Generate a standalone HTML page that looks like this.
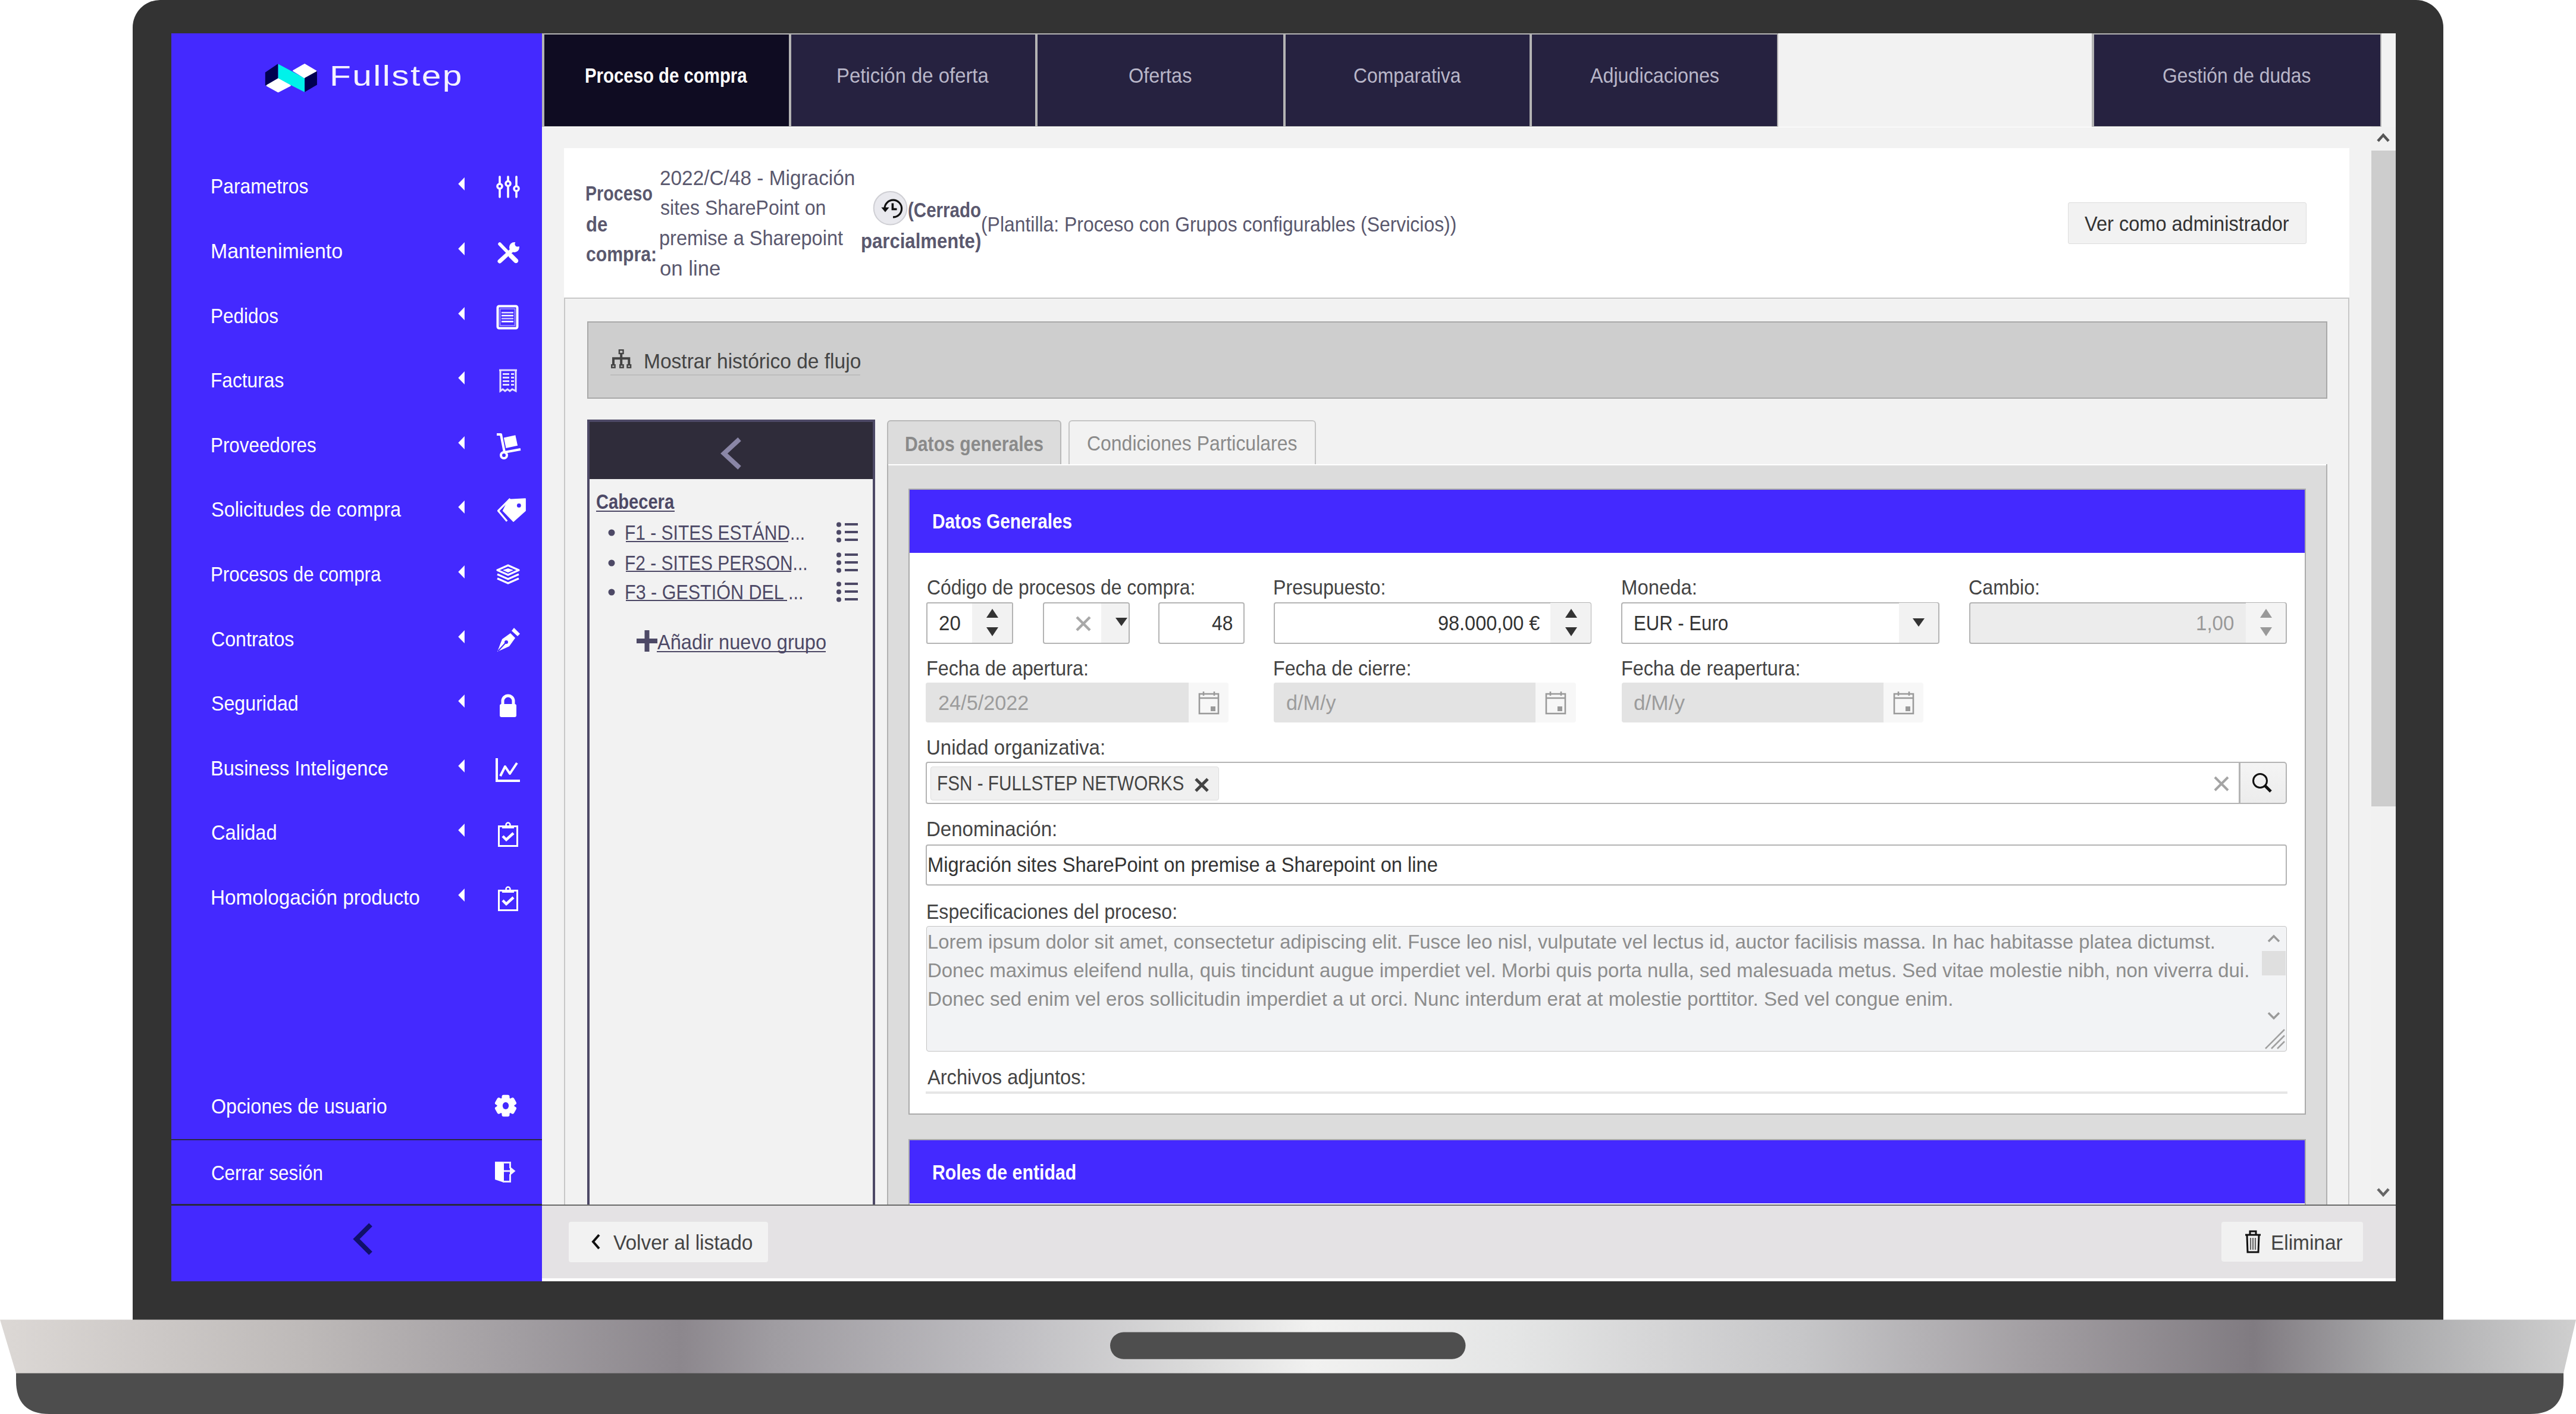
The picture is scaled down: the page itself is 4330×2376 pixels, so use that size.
<!DOCTYPE html>
<html><head><meta charset="utf-8"><style>
html,body{margin:0;padding:0;width:4330px;height:2376px;overflow:hidden;background:#ffffff;}
body{position:relative;font-family:"Liberation Sans", sans-serif;}
.a{position:absolute;box-sizing:border-box;}
.t{position:absolute;white-space:nowrap;transform-origin:0 0;}
</style></head><body>
<div class="a" style="left:223.0px;top:0.0px;width:3883.5px;height:2218.0px;background:#333333;border-radius:46px 46px 0 0;"></div>
<svg class="a" style="left:0.0px;top:2150.0px;" width="4330.0" height="226.0" viewBox="0 0 4330 226"><defs><linearGradient id="bg1" x1="0" x2="1" y1="0" y2="0"><stop offset="0" stop-color="#dcd8d5"/><stop offset="0.12" stop-color="#bdb9b8"/><stop offset="0.2" stop-color="#a29ea2"/><stop offset="0.264" stop-color="#8c878d"/><stop offset="0.3" stop-color="#9f9ca1"/><stop offset="0.39" stop-color="#bebdc1"/><stop offset="0.46" stop-color="#d9d9d9"/><stop offset="0.51" stop-color="#f1f1f0"/><stop offset="0.59" stop-color="#e4e5e5"/><stop offset="0.64" stop-color="#d6d6d7"/><stop offset="0.7" stop-color="#c6c6c8"/><stop offset="0.79" stop-color="#a29ea2"/><stop offset="0.875" stop-color="#807b81"/><stop offset="0.93" stop-color="#a9a9ab"/><stop offset="1.0" stop-color="#cfcfcf"/></linearGradient></defs><path d="M27 157 L4309 157 L4309 170 Q4309 226 4253 226 L83 226 Q27 226 27 170 Z" fill="#4d4d4d"/><path d="M0 67.6 L4330 67.6 L4309 157.5 L27 157.5 Z" fill="url(#bg1)"/><rect x="1866" y="88.4" width="597.5" height="45.4" rx="22.7" fill="#4e4e4e"/></svg>
<div class="a" style="left:288.0px;top:56.0px;width:3738.7px;height:2096.5px;background:#ffffff;"></div>
<div class="a" style="left:911.0px;top:56.0px;width:3115.7px;height:2092.0px;background:#f2f2f2;"></div>
<div class="a" style="left:288.0px;top:56.0px;width:623.0px;height:2096.5px;background:#4429ff;"></div>
<svg class="a" style="left:440.0px;top:100.0px;" width="100.0" height="60.0" viewBox="0 0 100 60"><polygon points="6.4,22 26.7,8.2 26.7,31 7.6,43.7 6.4,42.4" fill="#000050" stroke="#000050" stroke-width="1.2" stroke-linejoin="round"/><polygon points="27.6,7.6 72.1,31.4 72.1,54.7 27.6,32.2" fill="#00f2ea"/><polygon points="8.6,43.7 27.6,32.7 47.8,43.7 27.6,54.2" fill="#ffffff" stroke="#ffffff" stroke-width="2.2" stroke-linejoin="round"/><polygon points="53.2,18.9 72.1,8.2 91.1,19.5 72.1,30.5" fill="#ffffff" stroke="#ffffff" stroke-width="2.2" stroke-linejoin="round"/><polygon points="72.1,31 92.9,19.5 92.9,42.4 72.1,54.7" fill="#000050"/></svg>
<div class="t" style="left:553.8px;top:103.9px;font-size:48px;line-height:48px;color:#f4f2ff;transform:scaleX(1.2206);letter-spacing:2px;">Fullstep</div>
<div class="t" style="left:353.7px;top:295.4px;font-size:35px;line-height:35px;color:#ffffff;transform:scaleX(0.9081);">Parametros</div>
<svg class="a" style="left:768.0px;top:297.4px;" width="16.0" height="24.0" viewBox="0 0 16 24"><polygon points="2.2,12 12.9,1 12.9,23" fill="#ffffff"/></svg>
<div class="t" style="left:353.6px;top:404.0px;font-size:35px;line-height:35px;color:#ffffff;transform:scaleX(0.9673);">Mantenimiento</div>
<svg class="a" style="left:768.0px;top:406.0px;" width="16.0" height="24.0" viewBox="0 0 16 24"><polygon points="2.2,12 12.9,1 12.9,23" fill="#ffffff"/></svg>
<div class="t" style="left:353.7px;top:512.6px;font-size:35px;line-height:35px;color:#ffffff;transform:scaleX(0.9009);">Pedidos</div>
<svg class="a" style="left:768.0px;top:514.6px;" width="16.0" height="24.0" viewBox="0 0 16 24"><polygon points="2.2,12 12.9,1 12.9,23" fill="#ffffff"/></svg>
<div class="t" style="left:353.7px;top:621.2px;font-size:35px;line-height:35px;color:#ffffff;transform:scaleX(0.9053);">Facturas</div>
<svg class="a" style="left:768.0px;top:623.2px;" width="16.0" height="24.0" viewBox="0 0 16 24"><polygon points="2.2,12 12.9,1 12.9,23" fill="#ffffff"/></svg>
<div class="t" style="left:353.7px;top:729.8px;font-size:35px;line-height:35px;color:#ffffff;transform:scaleX(0.8956);">Proveedores</div>
<svg class="a" style="left:768.0px;top:731.8px;" width="16.0" height="24.0" viewBox="0 0 16 24"><polygon points="2.2,12 12.9,1 12.9,23" fill="#ffffff"/></svg>
<div class="t" style="left:354.6px;top:838.4px;font-size:35px;line-height:35px;color:#ffffff;transform:scaleX(0.9265);">Solicitudes de compra</div>
<svg class="a" style="left:768.0px;top:840.4px;" width="16.0" height="24.0" viewBox="0 0 16 24"><polygon points="2.2,12 12.9,1 12.9,23" fill="#ffffff"/></svg>
<div class="t" style="left:353.7px;top:947.0px;font-size:35px;line-height:35px;color:#ffffff;transform:scaleX(0.8920);">Procesos de compra</div>
<svg class="a" style="left:768.0px;top:949.0px;" width="16.0" height="24.0" viewBox="0 0 16 24"><polygon points="2.2,12 12.9,1 12.9,23" fill="#ffffff"/></svg>
<div class="t" style="left:354.6px;top:1055.6px;font-size:35px;line-height:35px;color:#ffffff;transform:scaleX(0.9185);">Contratos</div>
<svg class="a" style="left:768.0px;top:1057.6px;" width="16.0" height="24.0" viewBox="0 0 16 24"><polygon points="2.2,12 12.9,1 12.9,23" fill="#ffffff"/></svg>
<div class="t" style="left:354.6px;top:1164.2px;font-size:35px;line-height:35px;color:#ffffff;transform:scaleX(0.9191);">Seguridad</div>
<svg class="a" style="left:768.0px;top:1166.2px;" width="16.0" height="24.0" viewBox="0 0 16 24"><polygon points="2.2,12 12.9,1 12.9,23" fill="#ffffff"/></svg>
<div class="t" style="left:353.6px;top:1272.8px;font-size:35px;line-height:35px;color:#ffffff;transform:scaleX(0.9308);">Business Inteligence</div>
<svg class="a" style="left:768.0px;top:1274.8px;" width="16.0" height="24.0" viewBox="0 0 16 24"><polygon points="2.2,12 12.9,1 12.9,23" fill="#ffffff"/></svg>
<div class="t" style="left:354.6px;top:1381.4px;font-size:35px;line-height:35px;color:#ffffff;transform:scaleX(0.9318);">Calidad</div>
<svg class="a" style="left:768.0px;top:1383.4px;" width="16.0" height="24.0" viewBox="0 0 16 24"><polygon points="2.2,12 12.9,1 12.9,23" fill="#ffffff"/></svg>
<div class="t" style="left:353.6px;top:1490.0px;font-size:35px;line-height:35px;color:#ffffff;transform:scaleX(0.9517);">Homologación producto</div>
<svg class="a" style="left:768.0px;top:1492.0px;" width="16.0" height="24.0" viewBox="0 0 16 24"><polygon points="2.2,12 12.9,1 12.9,23" fill="#ffffff"/></svg>
<svg class="a" style="left:829.5px;top:290.0px;" width="48.0" height="48.0" viewBox="-24 -24 48 48"><g stroke="#ffffff" stroke-width="3.6" stroke-linecap="round" fill="#4429ff"><line x1="-14" y1="-17" x2="-14" y2="17"/><line x1="0" y1="-17" x2="0" y2="17"/><line x1="14" y1="-17" x2="14" y2="17"/><circle cx="-14" cy="-1" r="4"/><circle cx="0" cy="-5.5" r="4"/><circle cx="14" cy="3" r="4"/></g></svg>
<svg class="a" style="left:829.5px;top:400.0px;" width="48.0" height="48.0" viewBox="-24 -24 48 48"><g stroke="#ffffff" stroke-linecap="round" fill="none"><line x1="-14" y1="-14" x2="14" y2="15" stroke-width="5.5"/><line x1="-14" y1="15" x2="8" y2="-5" stroke-width="7"/><line x1="5" y1="6" x2="13" y2="14" stroke-width="8"/></g><circle cx="10.5" cy="-8.5" r="8.5" fill="#ffffff"/><circle cx="16" cy="-14" r="4.6" fill="#4429ff"/></svg>
<svg class="a" style="left:829.0px;top:509.0px;" width="48.0" height="48.0" viewBox="-24 -24 48 48"><rect x="-16.5" y="-18.5" width="33" height="37" rx="2.5" fill="none" stroke="#ffffff" stroke-width="4"/><rect x="-12.5" y="-14" width="25" height="28" fill="none" stroke="#ffffff" stroke-opacity="0.55" stroke-width="1.5"/><g fill="#ffffff"><rect x="-10" y="-9" width="20" height="2.6" opacity=".8"/><rect x="-10" y="-4" width="20" height="2.6"/><rect x="-10" y="1" width="20" height="2.6" opacity=".7"/><rect x="-10" y="6" width="20" height="2.6"/></g></svg>
<svg class="a" style="left:829.5px;top:616.0px;" width="48.0" height="48.0" viewBox="-24 -24 48 48"><g opacity=".85"><g fill="none" stroke="#ffffff" stroke-width="3"><path d="M-15 -18 L15 -18 M-13 -18 L-13 17 L-9 14 L-5 17 L-1 14 L3 17 L7 14 L13 17 L13 -18"/></g><g fill="#ffffff"><rect x="-9" y="-13" width="11" height="3"/><rect x="5" y="-13" width="5" height="3"/><rect x="-9" y="-7" width="11" height="3"/><rect x="5" y="-7" width="5" height="3"/><rect x="-9" y="-1" width="11" height="3"/><rect x="5" y="-1" width="5" height="3"/><rect x="-9" y="5" width="11" height="3"/><rect x="5" y="5" width="5" height="3"/></g></g></svg>
<svg class="a" style="left:831.0px;top:726.0px;" width="48.0" height="48.0" viewBox="-24 -24 48 48"><path d="M-20 -20 L-13 -20 L-7 10 L20 5" fill="none" stroke="#ffffff" stroke-width="4" stroke-linejoin="round"/><circle cx="-8" cy="15" r="5" fill="#4429ff" stroke="#ffffff" stroke-width="4"/><rect x="-5" y="-16" width="20" height="18" transform="rotate(-12)" fill="#ffffff"/></svg>
<svg class="a" style="left:836.0px;top:833.0px;" width="48.0" height="48.0" viewBox="-24 -24 48 48"><path d="M-5.1 -17.5 L23.1 -18.9 L23.1 1.3 L3 19.2 L-14.5 1.3 Z" fill="#ffffff" stroke="#ffffff" stroke-width="1.5" stroke-linejoin="round"/><circle cx="12.3" cy="-7.6" r="3.4" fill="#4429ff"/><path d="M-2.4 -18.9 L-22.6 1.3 L-7.8 18.7" stroke="#ffffff" stroke-width="3.2" fill="none"/></svg>
<svg class="a" style="left:830.0px;top:942.0px;" width="48.0" height="48.0" viewBox="-24 -24 48 48"><g fill="none" stroke="#ffffff" stroke-width="3.4" stroke-linejoin="round"><path d="M0 -16 L18 -8 L0 0 L-18 -8Z"/><path d="M-18 -1 L0 7 L18 -1"/><path d="M-18 6 L0 14 L18 6"/></g><path d="M0 -11 L9 -8 L0 -4 L-9 -8Z" fill="#ffffff"/></svg>
<svg class="a" style="left:830.0px;top:1052.0px;" width="48.0" height="48.0" viewBox="-24 -24 48 48"><path d="M-18 19 L-10 -2 L4 -12 L12 -4 L2 10 Z" fill="#ffffff"/><path d="M6 -16 L10 -21 L20 -11 L16 -7Z" fill="#ffffff"/><circle cx="-3" cy="3" r="3" fill="#4429ff"/><line x1="-17" y1="18" x2="-4" y2="4" stroke="#4429ff" stroke-width="2"/></svg>
<svg class="a" style="left:830.0px;top:1163.0px;" width="48.0" height="48.0" viewBox="-24 -24 48 48"><rect x="-14" y="-4" width="28" height="22" rx="3" fill="#ffffff"/><path d="M-9 -3 L-9 -9 A9 9 0 0 1 9 -9 L9 -3" fill="none" stroke="#ffffff" stroke-width="5"/></svg>
<svg class="a" style="left:830.0px;top:1270.0px;" width="48.0" height="48.0" viewBox="-24 -24 48 48"><path d="M-19 -20 L-19 18 L20 18" fill="none" stroke="#ffffff" stroke-width="4"/><path d="M-13 10 L-5 -6 L3 6 L15 -12" fill="none" stroke="#ffffff" stroke-width="4" stroke-linejoin="round"/></svg>
<svg class="a" style="left:829.5px;top:1379.0px;" width="48.0" height="48.0" viewBox="-24 -24 48 48"><rect x="-15.5" y="-14.5" width="31" height="33" fill="none" stroke="#ffffff" stroke-width="3"/><rect x="-10" y="-16" width="20" height="5" fill="#ffffff"/><circle cx="0" cy="-17" r="3.5" fill="none" stroke="#ffffff" stroke-width="2.5"/><path d="M-9 2 L-3 8 L9 -3" fill="none" stroke="#ffffff" stroke-width="4.5"/></svg>
<svg class="a" style="left:829.5px;top:1487.0px;" width="48.0" height="48.0" viewBox="-24 -24 48 48"><rect x="-15.5" y="-14.5" width="31" height="33" fill="none" stroke="#ffffff" stroke-width="3"/><rect x="-10" y="-16" width="20" height="5" fill="#ffffff"/><circle cx="0" cy="-17" r="3.5" fill="none" stroke="#ffffff" stroke-width="2.5"/><path d="M-9 2 L-3 8 L9 -3" fill="none" stroke="#ffffff" stroke-width="4.5"/></svg>
<div class="t" style="left:354.6px;top:1841.4px;font-size:35px;line-height:35px;color:#ffffff;transform:scaleX(0.9210);">Opciones de usuario</div>
<svg class="a" style="left:826.0px;top:1833.6px;" width="48.0" height="48.0" viewBox="-24 -24 48 48"><g fill="#ffffff"><circle cx="0" cy="0" r="14.5"/><rect x="-6.5" y="-18.3" width="13" height="9" rx="3" transform="rotate(0)"/><rect x="-6.5" y="-18.3" width="13" height="9" rx="3" transform="rotate(60)"/><rect x="-6.5" y="-18.3" width="13" height="9" rx="3" transform="rotate(120)"/><rect x="-6.5" y="-18.3" width="13" height="9" rx="3" transform="rotate(180)"/><rect x="-6.5" y="-18.3" width="13" height="9" rx="3" transform="rotate(240)"/><rect x="-6.5" y="-18.3" width="13" height="9" rx="3" transform="rotate(300)"/></g><ellipse cx="0" cy="0" rx="5.2" ry="6" fill="#4429ff"/></svg>
<div class="a" style="left:288.0px;top:1913.8px;width:623.0px;height:2.5px;background:#2a2a40;"></div>
<div class="t" style="left:354.6px;top:1953.4px;font-size:35px;line-height:35px;color:#ffffff;transform:scaleX(0.8945);">Cerrar sesión</div>
<svg class="a" style="left:825.0px;top:1946.0px;" width="48.0" height="48.0" viewBox="-24 -24 48 48"><path d="M-17 -18 L-2 -18 L-2 17 L-17 12Z" fill="#ffffff"/><path d="M-4 -16.5 L8.5 -16.5 L8.5 -7 M-4 15.5 L8.5 15.5 L8.5 3 M-2 -2.2 L10 -2.2" fill="none" stroke="#ebe8ff" stroke-width="3"/><path d="M8 -10 L17.5 -2.2 L8 5.6Z" fill="#f4f2ff"/></svg>
<div class="a" style="left:288.0px;top:2023.3px;width:623.0px;height:2.5px;background:#2a2a40;"></div>
<svg class="a" style="left:590.0px;top:2050.0px;" width="40.0" height="64.0" viewBox="0 0 40 64"><path d="M33 8 L9 32 L33 56" fill="none" stroke="#10106a" stroke-width="8"/></svg>
<div class="a" style="left:911.0px;top:56.0px;width:3.5px;height:156.5px;background:#c4c4c4;"></div>
<div class="a" style="left:910.7px;top:56.0px;width:416.9px;height:156.5px;background:#b4b4b4;"></div>
<div class="a" style="left:1325.8px;top:56.0px;width:415.8px;height:156.5px;background:#b4b4b4;"></div>
<div class="a" style="left:1739.8px;top:56.0px;width:419.2px;height:156.5px;background:#b4b4b4;"></div>
<div class="a" style="left:2156.5px;top:56.0px;width:416.5px;height:156.5px;background:#b4b4b4;"></div>
<div class="a" style="left:2571.0px;top:56.0px;width:418.0px;height:156.5px;background:#b4b4b4;"></div>
<div class="a" style="left:3515.5px;top:56.0px;width:487.5px;height:156.5px;background:#b4b4b4;"></div>
<div class="a" style="left:914.7px;top:57.8px;width:410.9px;height:154.7px;background:#0f0c22;"></div>
<div class="t" style="left:982.8px;top:109.4px;font-size:35px;line-height:35px;color:#ffffff;font-weight:bold;transform:scaleX(0.8393);">Proceso de compra</div>
<div class="a" style="left:1329.8px;top:57.8px;width:409.8px;height:154.7px;background:#262240;"></div>
<div class="t" style="left:1405.6px;top:109.4px;font-size:35px;line-height:35px;color:#b8b6c8;transform:scaleX(0.9390);">Petición de oferta</div>
<div class="a" style="left:1743.8px;top:57.8px;width:413.2px;height:154.7px;background:#262240;"></div>
<div class="t" style="left:1897.0px;top:109.4px;font-size:35px;line-height:35px;color:#b8b6c8;transform:scaleX(0.9271);">Ofertas</div>
<div class="a" style="left:2160.5px;top:57.8px;width:410.5px;height:154.7px;background:#262240;"></div>
<div class="t" style="left:2274.8px;top:109.4px;font-size:35px;line-height:35px;color:#b8b6c8;transform:scaleX(0.9093);">Comparativa</div>
<div class="a" style="left:2575.0px;top:57.8px;width:412.0px;height:154.7px;background:#262240;"></div>
<div class="t" style="left:2672.8px;top:109.4px;font-size:35px;line-height:35px;color:#b8b6c8;transform:scaleX(0.9216);">Adjudicaciones</div>
<div class="a" style="left:3519.5px;top:57.8px;width:481.5px;height:154.7px;background:#262240;"></div>
<div class="t" style="left:3635.3px;top:109.4px;font-size:35px;line-height:35px;color:#b8b6c8;transform:scaleX(0.9089);">Gestión de dudas</div>
<div class="a" style="left:914.0px;top:212.5px;width:3072.0px;height:1.5px;background:#ffffff;"></div>
<div class="a" style="left:3986.0px;top:214.0px;width:40.7px;height:1810.0px;background:#f1f1f1;"></div>
<div class="a" style="left:3986.0px;top:253.0px;width:40.7px;height:1102.0px;background:#cdcdcd;"></div>
<svg class="a" style="left:3994.0px;top:218.0px;" width="24.0" height="26.0" viewBox="0 0 24 26"><path d="M3 19 L12 9 L21 19" fill="none" stroke="#555" stroke-width="4.5"/></svg>
<svg class="a" style="left:3994.0px;top:1990.0px;" width="24.0" height="26.0" viewBox="0 0 24 26"><path d="M3 8 L12 18 L21 8" fill="none" stroke="#666" stroke-width="4.5"/></svg>
<div class="a" style="left:947.5px;top:248.5px;width:3001.5px;height:252.5px;background:#ffffff;"></div>
<div class="a" style="left:947.5px;top:499.5px;width:3001.5px;height:2.0px;background:#c8c8c8;"></div>
<div class="t" style="left:983.9px;top:307.4px;font-size:35px;line-height:35px;color:#5a586e;font-weight:bold;transform:scaleX(0.8177);">Proceso</div>
<div class="t" style="left:984.6px;top:359.4px;font-size:35px;line-height:35px;color:#5a586e;font-weight:bold;transform:scaleX(0.8888);">de</div>
<div class="t" style="left:984.6px;top:409.4px;font-size:35px;line-height:35px;color:#5a586e;font-weight:bold;transform:scaleX(0.8629);">compra:</div>
<div class="t" style="left:1109.0px;top:281.4px;font-size:35px;line-height:35px;color:#5a586e;transform:scaleX(0.9536);">2022/C/48 - Migración</div>
<div class="t" style="left:1110.0px;top:331.4px;font-size:35px;line-height:35px;color:#5a586e;transform:scaleX(0.9171);">sites SharePoint on</div>
<div class="t" style="left:1108.1px;top:382.4px;font-size:35px;line-height:35px;color:#5a586e;transform:scaleX(0.9288);">premise a Sharepoint</div>
<div class="t" style="left:1109.0px;top:433.4px;font-size:35px;line-height:35px;color:#5a586e;transform:scaleX(0.9913);">on line</div>
<svg class="a" style="left:1467.0px;top:320.0px;" width="60.0" height="60.0" viewBox="0 0 60 60"><circle cx="29.5" cy="29.7" r="27.8" fill="#e9e9ee" stroke="#cfcfd4" stroke-width="2"/><path d="M20 30.5 A14.3 14.3 0 1 1 34 44.8" fill="none" stroke="#111" stroke-width="3.2"/><path d="M14.3 28.5 L27.6 28.5 L21 36.6Z" fill="#111"/><path d="M33.4 21.4 L33.4 31.5 L40.5 31.5" fill="none" stroke="#111" stroke-width="3.6"/></svg>
<div class="t" style="left:1525.9px;top:335.4px;font-size:35px;line-height:35px;color:#5a586e;font-weight:bold;transform:scaleX(0.8444);">(Cerrado</div>
<div class="t" style="left:1447.2px;top:387.4px;font-size:35px;line-height:35px;color:#5a586e;font-weight:bold;transform:scaleX(0.8887);">parcialmente)</div>
<div class="t" style="left:1648.9px;top:358.7px;font-size:35px;line-height:35px;color:#5a586e;transform:scaleX(0.9111);">(Plantilla: Proceso con Grupos configurables (Servicios))</div>
<div class="a" style="left:3476.0px;top:340.0px;width:400.5px;height:69.5px;background:#f2f2f2;border:1.5px solid #dddddd;box-sizing:border-box;border-radius:3px;"></div>
<div class="t" style="left:3503.5px;top:357.9px;font-size:35px;line-height:35px;color:#333333;transform:scaleX(0.9299);">Ver como administrador</div>
<div class="a" style="left:947.5px;top:501.5px;width:2.0px;height:1522.5px;background:#c8c8c8;"></div>
<div class="a" style="left:3947.0px;top:501.5px;width:2.0px;height:1522.5px;background:#c8c8c8;"></div>
<div class="a" style="left:987.0px;top:540.0px;width:2924.5px;height:129.5px;background:#cecece;border:2px solid #a9a9a9;box-sizing:border-box;"></div>
<svg class="a" style="left:1024.0px;top:584.0px;" width="40.0" height="38.0" viewBox="0 0 40 38"><g fill="none" stroke="#444" stroke-width="3"><path d="M20.2 11 L20.2 28 M7 28 L7 18.2 L33.3 18.2 L33.3 28" stroke-width="4"/></g><g fill="none" stroke="#444" stroke-width="2.4"><rect x="4.2" y="29.2" width="5.4" height="4.4"/><rect x="18.2" y="29.2" width="5.4" height="4.4"/><rect x="30.5" y="29.2" width="5.6" height="4.4"/><rect x="16.9" y="4.2" width="6.6" height="5.8"/></g></svg>
<div class="t" style="left:1082.1px;top:588.9px;font-size:35px;line-height:35px;color:#444444;transform:scaleX(0.9582);">Mostrar histórico de flujo</div>
<div class="a" style="left:1026.0px;top:628.5px;width:420.0px;height:2.0px;background:#bdbdbd;"></div>
<div class="a" style="left:987.3px;top:705.0px;width:483.5px;height:1319.0px;background:#f2f2f2;border:4px solid #4d4966;box-sizing:border-box;border-bottom:none;"></div>
<div class="a" style="left:991.3px;top:709.0px;width:475.5px;height:96.0px;background:#2f2c3a;"></div>
<svg class="a" style="left:1205.0px;top:730.0px;" width="48.0" height="64.0" viewBox="0 0 48 64"><path d="M38 8 L12 32 L38 56" fill="none" stroke="#8a86a6" stroke-width="8"/></svg>
<div class="t" style="left:1002.2px;top:825.4px;font-size:35px;line-height:35px;color:#4d4966;font-weight:bold;transform:scaleX(0.8318);">Cabecera</div>
<div class="a" style="left:1002.0px;top:857.5px;width:132.0px;height:2.0px;background:#4d4966;"></div>
<svg class="a" style="left:1021.0px;top:888.0px;" width="14.0" height="14.0" viewBox="0 0 14 14"><circle cx="7" cy="7" r="5.5" fill="#4d4966"/></svg>
<div class="t" style="left:1049.8px;top:877.4px;font-size:35px;line-height:35px;color:#4d4966;transform:scaleX(0.8562);">F1 - SITES ESTÁND...</div>
<div class="a" style="left:1051.5px;top:908.5px;width:273.5px;height:2.0px;background:#4d4966;"></div>
<svg class="a" style="left:1405.0px;top:877.0px;" width="42.0" height="36.0" viewBox="0 0 42 36"><g fill="#4d4966"><circle cx="5" cy="4.5" r="4"/><circle cx="5" cy="17.5" r="4"/><circle cx="5" cy="30.5" r="4"/><rect x="15" y="2" width="22" height="4"/><rect x="15" y="15" width="22" height="4"/><rect x="15" y="28" width="22" height="4"/></g></svg>
<svg class="a" style="left:1021.0px;top:938.7px;" width="14.0" height="14.0" viewBox="0 0 14 14"><circle cx="7" cy="7" r="5.5" fill="#4d4966"/></svg>
<div class="t" style="left:1049.8px;top:928.1px;font-size:35px;line-height:35px;color:#4d4966;transform:scaleX(0.8548);">F2 - SITES PERSON...</div>
<div class="a" style="left:1051.5px;top:959.2px;width:278.5px;height:2.0px;background:#4d4966;"></div>
<svg class="a" style="left:1405.0px;top:927.7px;" width="42.0" height="36.0" viewBox="0 0 42 36"><g fill="#4d4966"><circle cx="5" cy="4.5" r="4"/><circle cx="5" cy="17.5" r="4"/><circle cx="5" cy="30.5" r="4"/><rect x="15" y="2" width="22" height="4"/><rect x="15" y="15" width="22" height="4"/><rect x="15" y="28" width="22" height="4"/></g></svg>
<svg class="a" style="left:1021.0px;top:987.7px;" width="14.0" height="14.0" viewBox="0 0 14 14"><circle cx="7" cy="7" r="5.5" fill="#4d4966"/></svg>
<div class="t" style="left:1049.8px;top:977.1px;font-size:35px;line-height:35px;color:#4d4966;transform:scaleX(0.8713);">F3 - GESTIÓN DEL ...</div>
<div class="a" style="left:1051.5px;top:1008.2px;width:271.5px;height:2.0px;background:#4d4966;"></div>
<svg class="a" style="left:1405.0px;top:976.7px;" width="42.0" height="36.0" viewBox="0 0 42 36"><g fill="#4d4966"><circle cx="5" cy="4.5" r="4"/><circle cx="5" cy="17.5" r="4"/><circle cx="5" cy="30.5" r="4"/><rect x="15" y="2" width="22" height="4"/><rect x="15" y="15" width="22" height="4"/><rect x="15" y="28" width="22" height="4"/></g></svg>
<svg class="a" style="left:1068.0px;top:1058.0px;" width="40.0" height="40.0" viewBox="0 0 40 40"><g fill="#4d4966"><rect x="2" y="15" width="35" height="8"/><rect x="15.5" y="1" width="8" height="36"/></g></svg>
<div class="t" style="left:1105.0px;top:1061.4px;font-size:35px;line-height:35px;color:#4d4966;transform:scaleX(0.9298);">Añadir nuevo grupo</div>
<div class="a" style="left:1104.0px;top:1093.5px;width:284.0px;height:2.0px;background:#4d4966;"></div>
<div class="a" style="left:1490.8px;top:705.5px;width:293.5px;height:76.5px;background:#dcdcdc;border:2px solid #b8b8b8;box-sizing:border-box;border-radius:6px 6px 0 0;"></div>
<div class="a" style="left:1795.5px;top:705.5px;width:416.7px;height:76.5px;background:#f2f2f2;border:2px solid #c4c4c4;box-sizing:border-box;border-radius:6px 6px 0 0;border-bottom:none;"></div>
<div class="t" style="left:1521.1px;top:728.0px;font-size:35px;line-height:35px;color:#8a8a8a;font-weight:bold;transform:scaleX(0.8622);">Datos generales</div>
<div class="t" style="left:1826.9px;top:727.4px;font-size:35px;line-height:35px;color:#8a8a8a;transform:scaleX(0.9128);">Condiciones Particulares</div>
<div class="a" style="left:1490.8px;top:780.0px;width:2421.2px;height:1244.0px;background:#dcdcdc;border:2px solid #b0b0b0;box-sizing:border-box;border-bottom:none;"></div>
<div class="a" style="left:1492.8px;top:780.0px;width:2417.2px;height:2.0px;background:#ffffff;"></div>
<div class="a" style="left:1527.0px;top:821.0px;width:2348.5px;height:1052.0px;background:#ffffff;border:2px solid #aaaaaa;box-sizing:border-box;"></div>
<div class="a" style="left:1529.0px;top:823.0px;width:2344.5px;height:105.5px;background:#4429ff;"></div>
<div class="t" style="left:1567.1px;top:858.4px;font-size:35px;line-height:35px;color:#ffffff;font-weight:bold;transform:scaleX(0.8511);">Datos Generales</div>
<div class="t" style="left:1557.6px;top:968.9px;font-size:35px;line-height:35px;color:#444444;transform:scaleX(0.9098);">Código de procesos de compra:</div>
<div class="t" style="left:2140.2px;top:968.9px;font-size:35px;line-height:35px;color:#444444;transform:scaleX(0.9180);">Presupuesto:</div>
<div class="t" style="left:2724.6px;top:968.9px;font-size:35px;line-height:35px;color:#444444;transform:scaleX(0.9393);">Moneda:</div>
<div class="t" style="left:3309.1px;top:968.9px;font-size:35px;line-height:35px;color:#444444;transform:scaleX(0.9210);">Cambio:</div>
<div class="a" style="left:1557.0px;top:1011.7px;width:146.0px;height:70.3px;background:#ffffff;border:2px solid #b4b4b4;box-sizing:border-box;border-radius:3px;"></div>
<div class="a" style="left:1634.0px;top:1013.5px;width:67.2px;height:66.7px;background:#f2f2f2;border-radius:0 3px 3px 0;"></div>
<div class="t" style="left:1578.1px;top:1029.4px;font-size:35px;line-height:35px;color:#333333;transform:scaleX(0.9449);">20</div>
<svg class="a" style="left:1654.0px;top:1021.0px;" width="28.0" height="52.0" viewBox="0 0 28 52"><path d="M14 2 L24 17 L4 17Z" fill="#333"/><path d="M14 48 L24 33 L4 33Z" fill="#333"/></svg>
<div class="a" style="left:1752.6px;top:1011.7px;width:146.0px;height:70.3px;background:#ffffff;border:2px solid #b4b4b4;box-sizing:border-box;border-radius:4px;"></div>
<div class="a" style="left:1851.4px;top:1013.5px;width:45.4px;height:66.7px;background:#f2f2f2;border-radius:0 3px 3px 0;"></div>
<svg class="a" style="left:1806.0px;top:1033.0px;" width="30.0" height="30.0" viewBox="0 0 30 30"><path d="M4 4 L26 26 M26 4 L4 26" stroke="#a8a8a8" stroke-width="4.5"/></svg>
<svg class="a" style="left:1872.0px;top:1035.0px;" width="26.0" height="20.0" viewBox="0 0 26 20"><path d="M3 3 L23 3 L13 17Z" fill="#333"/></svg>
<div class="a" style="left:1946.7px;top:1011.7px;width:145.3px;height:70.3px;background:#ffffff;border:2px solid #b4b4b4;box-sizing:border-box;border-radius:4px;"></div>
<div class="t" style="left:2037.0px;top:1029.4px;font-size:35px;line-height:35px;color:#333333;transform:scaleX(0.9075);">48</div>
<div class="a" style="left:2141.2px;top:1011.5px;width:534.3px;height:70.5px;background:#ffffff;border:2px solid #b4b4b4;box-sizing:border-box;border-radius:4px;"></div>
<div class="a" style="left:2605.6px;top:1013.3px;width:68.1px;height:66.9px;background:#f2f2f2;border-radius:0 3px 3px 0;"></div>
<div class="t" style="left:2416.5px;top:1029.4px;font-size:35px;line-height:35px;color:#333333;transform:scaleX(0.9268);">98.000,00 €</div>
<svg class="a" style="left:2627.0px;top:1021.0px;" width="28.0" height="52.0" viewBox="0 0 28 52"><path d="M14 2 L24 17 L4 17Z" fill="#333"/><path d="M14 48 L24 33 L4 33Z" fill="#333"/></svg>
<div class="a" style="left:2725.4px;top:1011.5px;width:534.9px;height:70.8px;background:#ffffff;border:2px solid #b4b4b4;box-sizing:border-box;border-radius:4px;"></div>
<div class="a" style="left:3191.8px;top:1013.3px;width:66.7px;height:67.2px;background:#f2f2f2;border-radius:0 3px 3px 0;"></div>
<div class="t" style="left:2745.7px;top:1029.4px;font-size:35px;line-height:35px;color:#333333;transform:scaleX(0.8891);">EUR - Euro</div>
<svg class="a" style="left:3212.0px;top:1036.0px;" width="26.0" height="20.0" viewBox="0 0 26 20"><path d="M3 3 L23 3 L13 17Z" fill="#333"/></svg>
<div class="a" style="left:3310.0px;top:1011.5px;width:533.9px;height:70.8px;background:#ececec;border:2px solid #b4b4b4;box-sizing:border-box;border-radius:4px;"></div>
<div class="a" style="left:3775.0px;top:1013.3px;width:67.1px;height:67.2px;background:#f4f4f4;border-radius:0 3px 3px 0;"></div>
<div class="t" style="left:3691.1px;top:1029.4px;font-size:35px;line-height:35px;color:#999999;transform:scaleX(0.9443);">1,00</div>
<svg class="a" style="left:3795.0px;top:1021.0px;" width="28.0" height="52.0" viewBox="0 0 28 52"><path d="M14 2 L24 17 L4 17Z" fill="#999"/><path d="M14 48 L24 33 L4 33Z" fill="#999"/></svg>
<div class="t" style="left:1557.2px;top:1104.7px;font-size:35px;line-height:35px;color:#444444;transform:scaleX(0.9230);">Fecha de apertura:</div>
<div class="t" style="left:2140.2px;top:1104.7px;font-size:35px;line-height:35px;color:#444444;transform:scaleX(0.9187);">Fecha de cierre:</div>
<div class="t" style="left:2724.7px;top:1104.7px;font-size:35px;line-height:35px;color:#444444;transform:scaleX(0.9220);">Fecha de reapertura:</div>
<div class="a" style="left:1556.0px;top:1146.5px;width:509.2px;height:67.0px;background:#f7f7f7;border-radius:4px;"></div>
<div class="a" style="left:1556.0px;top:1146.5px;width:441.8px;height:67.0px;background:#e3e3e3;border-radius:4px 0 0 4px;"></div>
<div class="t" style="left:1576.5px;top:1162.9px;font-size:35px;line-height:35px;color:#9c9c9c;transform:scaleX(0.9789);">24/5/2022</div>
<svg class="a" style="left:2012.5px;top:1160.0px;" width="38.0" height="42.0" viewBox="0 0 38 42"><g fill="none" stroke="#9a9a9a" stroke-width="2.6"><rect x="3" y="6" width="32" height="33"/><line x1="3" y1="13" x2="35" y2="13"/><line x1="10" y1="2" x2="10" y2="9"/><line x1="28" y1="2" x2="28" y2="9"/></g><rect x="22" y="27" width="8" height="8" fill="#9a9a9a"/></svg>
<div class="a" style="left:2141.2px;top:1146.5px;width:507.4px;height:67.0px;background:#f7f7f7;border-radius:4px;"></div>
<div class="a" style="left:2141.2px;top:1146.5px;width:439.9px;height:67.0px;background:#e3e3e3;border-radius:4px 0 0 4px;"></div>
<div class="t" style="left:2161.7px;top:1162.9px;font-size:35px;line-height:35px;color:#9c9c9c;transform:scaleX(0.9757);">d/M/y</div>
<svg class="a" style="left:2595.8px;top:1160.0px;" width="38.0" height="42.0" viewBox="0 0 38 42"><g fill="none" stroke="#9a9a9a" stroke-width="2.6"><rect x="3" y="6" width="32" height="33"/><line x1="3" y1="13" x2="35" y2="13"/><line x1="10" y1="2" x2="10" y2="9"/><line x1="28" y1="2" x2="28" y2="9"/></g><rect x="22" y="27" width="8" height="8" fill="#9a9a9a"/></svg>
<div class="a" style="left:2725.6px;top:1146.5px;width:507.7px;height:67.0px;background:#f7f7f7;border-radius:4px;"></div>
<div class="a" style="left:2725.6px;top:1146.5px;width:440.2px;height:67.0px;background:#e3e3e3;border-radius:4px 0 0 4px;"></div>
<div class="t" style="left:2746.1px;top:1162.9px;font-size:35px;line-height:35px;color:#9c9c9c;transform:scaleX(1.0051);">d/M/y</div>
<svg class="a" style="left:3180.6px;top:1160.0px;" width="38.0" height="42.0" viewBox="0 0 38 42"><g fill="none" stroke="#9a9a9a" stroke-width="2.6"><rect x="3" y="6" width="32" height="33"/><line x1="3" y1="13" x2="35" y2="13"/><line x1="10" y1="2" x2="10" y2="9"/><line x1="28" y1="2" x2="28" y2="9"/></g><rect x="22" y="27" width="8" height="8" fill="#9a9a9a"/></svg>
<div class="t" style="left:1557.1px;top:1238.1px;font-size:35px;line-height:35px;color:#444444;transform:scaleX(0.9435);">Unidad organizativa:</div>
<div class="a" style="left:1556.0px;top:1280.3px;width:2209.0px;height:70.7px;background:#ffffff;border:2px solid #b4b4b4;box-sizing:border-box;border-radius:4px 0 0 4px;"></div>
<div class="a" style="left:1564.3px;top:1288.0px;width:484.7px;height:57.3px;background:#f0f0f0;border:1.5px solid #dedede;box-sizing:border-box;border-radius:4px;"></div>
<div class="t" style="left:1575.3px;top:1298.4px;font-size:35px;line-height:35px;color:#444444;transform:scaleX(0.8486);">FSN - FULLSTEP NETWORKS</div>
<svg class="a" style="left:2006.0px;top:1305.0px;" width="28.0" height="28.0" viewBox="0 0 28 28"><path d="M4 4 L24 24 M24 4 L4 24" stroke="#444" stroke-width="5"/></svg>
<svg class="a" style="left:3720.0px;top:1303.0px;" width="28.0" height="28.0" viewBox="0 0 28 28"><path d="M3 3 L25 25 M25 3 L3 25" stroke="#a4a4a4" stroke-width="4"/></svg>
<div class="a" style="left:3763.7px;top:1280.3px;width:80.5px;height:70.7px;background:linear-gradient(#f4f4f4,#ececec);border:2px solid #b4b4b4;box-sizing:border-box;border-radius:0 5px 5px 0;"></div>
<svg class="a" style="left:3783.0px;top:1296.0px;" width="44.0" height="44.0" viewBox="0 0 44 44"><circle cx="16" cy="16" r="11.5" fill="none" stroke="#111" stroke-width="3"/><path d="M24 24 L34 34" stroke="#111" stroke-width="5"/></svg>
<div class="t" style="left:1557.1px;top:1374.7px;font-size:35px;line-height:35px;color:#444444;transform:scaleX(0.9434);">Denominación:</div>
<div class="a" style="left:1556.0px;top:1418.5px;width:2288.2px;height:69.5px;background:#ffffff;border:2px solid #b4b4b4;box-sizing:border-box;border-radius:4px;"></div>
<div class="t" style="left:1558.7px;top:1435.4px;font-size:35px;line-height:35px;color:#333333;transform:scaleX(0.9322);">Migración sites SharePoint on premise a Sharepoint on line</div>
<div class="t" style="left:1557.2px;top:1514.1px;font-size:35px;line-height:35px;color:#444444;transform:scaleX(0.9153);">Especificaciones del proceso:</div>
<div class="a" style="left:1556.5px;top:1555.7px;width:2287.0px;height:211.3px;background:#f2f3f5;border:1.8px solid #c4c4c4;box-sizing:border-box;border-radius:4px;"></div>
<div class="t" style="left:1558.7px;top:1564.6px;font-size:34px;line-height:34px;color:#8c8c8c;transform:scaleX(0.9643);">Lorem ipsum dolor sit amet, consectetur adipiscing elit. Fusce leo nisl, vulputate vel lectus id, auctor facilisis massa. In hac habitasse platea dictumst.</div>
<div class="t" style="left:1558.7px;top:1612.7px;font-size:34px;line-height:34px;color:#8c8c8c;transform:scaleX(0.9686);">Donec maximus eleifend nulla, quis tincidunt augue imperdiet vel. Morbi quis porta nulla, sed malesuada metus. Sed vitae molestie nibh, non viverra dui.</div>
<div class="t" style="left:1558.7px;top:1660.8px;font-size:34px;line-height:34px;color:#8c8c8c;transform:scaleX(0.9738);">Donec sed enim vel eros sollicitudin imperdiet a ut orci. Nunc interdum erat at molestie porttitor. Sed vel congue enim.</div>
<div class="a" style="left:3802.0px;top:1598.0px;width:39.7px;height:40.8px;background:#dfdfdf;"></div>
<svg class="a" style="left:3810.0px;top:1565.0px;" width="24.0" height="24.0" viewBox="0 0 24 24"><path d="M3 17 L12 8 L21 17" fill="none" stroke="#9a9a9a" stroke-width="3.5"/></svg>
<svg class="a" style="left:3810.0px;top:1695.0px;" width="24.0" height="24.0" viewBox="0 0 24 24"><path d="M3 7 L12 16 L21 7" fill="none" stroke="#9a9a9a" stroke-width="3.5"/></svg>
<svg class="a" style="left:3806.0px;top:1728.0px;" width="36.0" height="36.0" viewBox="0 0 36 36"><g stroke="#a0a0a0" stroke-width="2.5"><line x1="2" y1="34" x2="34" y2="2"/><line x1="12" y1="34" x2="34" y2="12"/><line x1="22" y1="34" x2="34" y2="22"/></g></svg>
<div class="t" style="left:1559.0px;top:1792.0px;font-size:35px;line-height:35px;color:#444444;transform:scaleX(0.9320);">Archivos adjuntos:</div>
<div class="a" style="left:1556.0px;top:1834.0px;width:2288.8px;height:3.5px;background:#e6e6e6;"></div>
<div class="a" style="left:1527.0px;top:1914.3px;width:2348.5px;height:109.7px;background:#ffffff;border:2px solid #aaaaaa;box-sizing:border-box;border-bottom:none;"></div>
<div class="a" style="left:1529.0px;top:1916.3px;width:2344.5px;height:105.7px;background:#4429ff;"></div>
<div class="t" style="left:1566.7px;top:1951.9px;font-size:35px;line-height:35px;color:#ffffff;font-weight:bold;transform:scaleX(0.8649);">Roles de entidad</div>
<div class="a" style="left:911.0px;top:2024.0px;width:3115.7px;height:124.0px;background:#e4e2e4;"></div>
<div class="a" style="left:911.0px;top:2023.5px;width:3115.7px;height:2.3px;background:#6a6a6a;"></div>
<div class="a" style="left:955.9px;top:2052.6px;width:335.4px;height:68.2px;background:#f2f2f2;border-radius:4px;"></div>
<svg class="a" style="left:990.0px;top:2072.0px;" width="24.0" height="30.0" viewBox="0 0 24 30"><path d="M17 3 L7 14.5 L17 26" fill="none" stroke="#111" stroke-width="4"/></svg>
<div class="t" style="left:1031.0px;top:2070.2px;font-size:35px;line-height:35px;color:#444444;transform:scaleX(0.9562);">Volver al listado</div>
<div class="a" style="left:3734.0px;top:2053.0px;width:237.5px;height:67.3px;background:#f1f1f1;border-radius:4px;"></div>
<svg class="a" style="left:3770.0px;top:2066.0px;" width="34.0" height="42.0" viewBox="0 0 34 42"><g fill="none" stroke="#111" stroke-width="3"><path d="M4 9 L30 9"/><path d="M12 9 L12 3 L22 3 L22 9"/><path d="M7 10 L8 38 L26 38 L27 10"/></g><g stroke="#666" stroke-width="2.2"><line x1="13" y1="14" x2="13" y2="34"/><line x1="17" y1="14" x2="17" y2="34"/><line x1="21" y1="14" x2="21" y2="34"/></g></svg>
<div class="t" style="left:3816.9px;top:2070.4px;font-size:35px;line-height:35px;color:#444444;transform:scaleX(0.9538);">Eliminar</div>
<div class="a" style="left:911.0px;top:2148.0px;width:3115.7px;height:4.5px;background:#ffffff;"></div>
</body></html>
